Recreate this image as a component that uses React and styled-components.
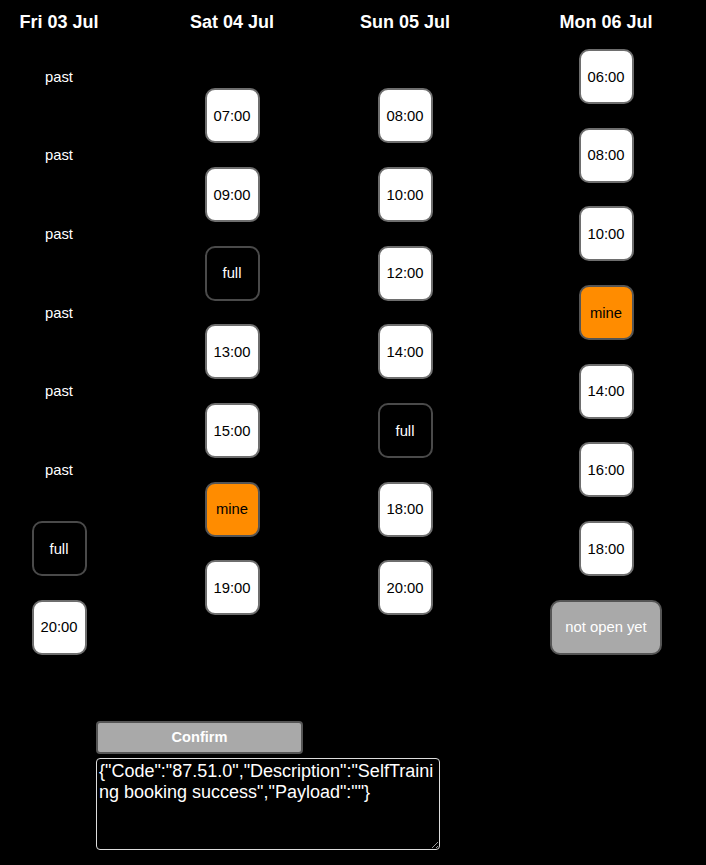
import React from "react";
import styled, { createGlobalStyle, css } from "styled-components";

const GlobalStyle = createGlobalStyle`
  html, body {
    margin: 0;
    padding: 0;
    background: #000;
  }
  body {
    font-family: "Liberation Sans", Arial, sans-serif;
    color: #fff;
  }
`;

const Page = styled.div`
  padding-top: 12px;
  min-height: 865px;
  box-sizing: border-box;
`;

const Schedule = styled.div`
  display: grid;
  grid-template-columns: 110px 110px 110px 166px;
  column-gap: 63px;
  row-gap: 16px;
  padding-left: 4px;
  align-items: center;
`;

const DayHeader = styled.div`
  text-align: center;
  font-weight: bold;
  font-size: 18px;
  line-height: 21px;
  color: #fff;
`;

const Column = styled.div`
  display: flex;
  flex-direction: column;
  align-items: center;
  gap: 23.7px;
`;

const variants = {
  open: css`
    background: #fff;
    color: #000;
    border-color: #6e6e6e;
  `,
  full: css`
    background: #000;
    color: #fff;
    border-color: #4a4a4a;
  `,
  mine: css`
    background: #ff8c00;
    color: #000;
    border-color: #555;
  `,
  closed: css`
    background: #a9a9a9;
    color: #fff;
    border-color: #555;
  `,
};

const Slot = styled.button`
  box-sizing: border-box;
  height: 55px;
  min-width: 55px;
  padding: 0 ${(p) => (p.$kind === "closed" ? "13px" : "0")};
  border: 2px solid;
  border-radius: 10px;
  font-family: "Liberation Sans", Arial, sans-serif;
  font-size: 14.8px;
  display: flex;
  align-items: center;
  justify-content: center;
  cursor: pointer;
  ${(p) => variants[p.$kind]}
`;

const PastLabel = styled.div`
  height: 55px;
  display: flex;
  align-items: center;
  justify-content: center;
  font-size: 14.8px;
  color: #fff;
`;

const Footer = styled.div`
  margin-top: 66px;
  margin-left: 96px;
  display: flex;
  flex-direction: column;
  align-items: flex-start;
  gap: 4px;
`;

const ConfirmButton = styled.button`
  box-sizing: border-box;
  width: 207px;
  height: 33px;
  background: #a9a9a9;
  border: 2px solid #555;
  border-radius: 4px;
  color: #fff;
  font-family: "Liberation Sans", Arial, sans-serif;
  font-weight: bold;
  font-size: 14.6px;
  cursor: pointer;
`;

const Output = styled.textarea`
  box-sizing: border-box;
  width: 344px;
  height: 92px;
  background: #000;
  color: #fff;
  border: 1px solid #ddd;
  border-radius: 4px;
  padding: 2px;
  margin: 0;
  font-family: "Liberation Sans", Arial, sans-serif;
  font-size: 18px;
  resize: both;
  outline: none;
`;

const days = [
  {
    label: "Fri 03 Jul",
    slots: [
      { kind: "past" },
      { kind: "past" },
      { kind: "past" },
      { kind: "past" },
      { kind: "past" },
      { kind: "past" },
      { kind: "full" },
      { kind: "open", time: "20:00" },
    ],
  },
  {
    label: "Sat 04 Jul",
    slots: [
      { kind: "open", time: "07:00" },
      { kind: "open", time: "09:00" },
      { kind: "full" },
      { kind: "open", time: "13:00" },
      { kind: "open", time: "15:00" },
      { kind: "mine" },
      { kind: "open", time: "19:00" },
    ],
  },
  {
    label: "Sun 05 Jul",
    slots: [
      { kind: "open", time: "08:00" },
      { kind: "open", time: "10:00" },
      { kind: "open", time: "12:00" },
      { kind: "open", time: "14:00" },
      { kind: "full" },
      { kind: "open", time: "18:00" },
      { kind: "open", time: "20:00" },
    ],
  },
  {
    label: "Mon 06 Jul",
    slots: [
      { kind: "open", time: "06:00" },
      { kind: "open", time: "08:00" },
      { kind: "open", time: "10:00" },
      { kind: "mine" },
      { kind: "open", time: "14:00" },
      { kind: "open", time: "16:00" },
      { kind: "open", time: "18:00" },
      { kind: "closed" },
    ],
  },
];

const labelFor = (s) => {
  if (s.kind === "full") return "full";
  if (s.kind === "mine") return "mine";
  if (s.kind === "closed") return "not open yet";
  return s.time;
};

export default function App() {
  return (
    <>
      <GlobalStyle />
      <Page>
        <Schedule>
          {days.map((d) => (
            <DayHeader key={d.label}>{d.label}</DayHeader>
          ))}
          {days.map((d) => (
            <Column key={d.label}>
              {d.slots.map((s, i) =>
                s.kind === "past" ? (
                  <PastLabel key={i}>past</PastLabel>
                ) : (
                  <Slot key={i} $kind={s.kind}>
                    {labelFor(s)}
                  </Slot>
                )
              )}
            </Column>
          ))}
        </Schedule>
        <Footer>
          <ConfirmButton>Confirm</ConfirmButton>
          <Output
            readOnly
            value={'{"Code":"87.51.0","Description":"SelfTraining booking success","Payload":""}'}
          />
        </Footer>
      </Page>
    </>
  );
}
